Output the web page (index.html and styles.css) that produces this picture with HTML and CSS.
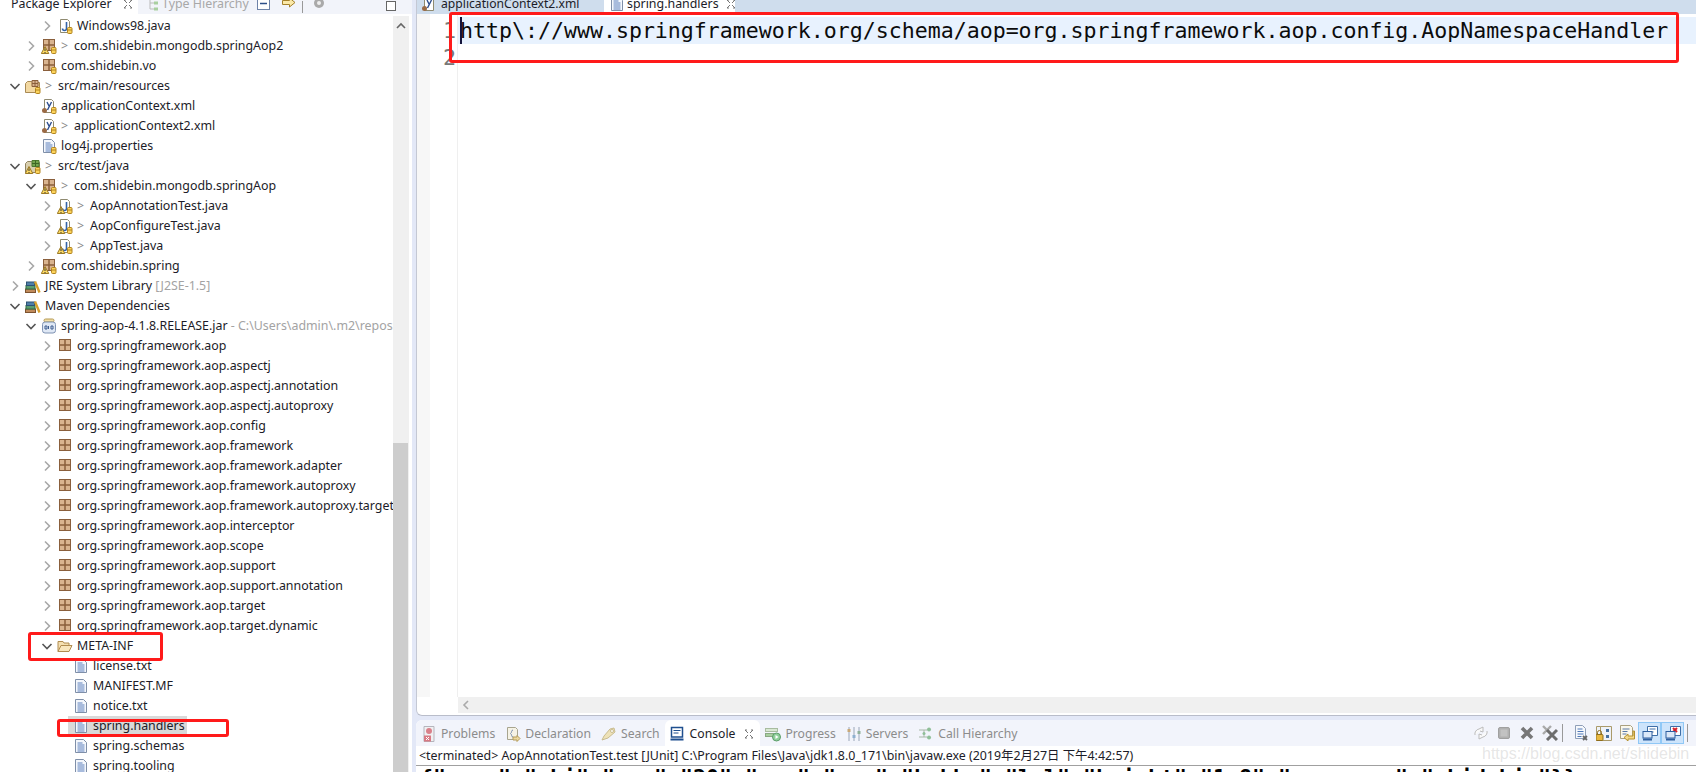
FILE: index.html
```html
<!DOCTYPE html>
<html lang="en">
<head>
<meta charset="utf-8">
<title>Eclipse - spring.handlers</title>
<link rel="stylesheet" href="styles.css">
</head>
<body>
<svg class="defs" width="0" height="0" aria-hidden="true">
  <defs>
    <symbol id="cr" viewBox="0 0 16 16"><path d="M6 3.5l4.5 4.5L6 12.500" fill="none" stroke="#a8a8a8" stroke-width="1.6"/></symbol>
    <symbol id="cd" viewBox="0 0 16 16"><path d="M3.500 6l4.500 4.500L12.500 6" fill="none" stroke="#555" stroke-width="1.6"/></symbol>
    <symbol id="close" viewBox="0 0 12 12"><path d="M2 2l3 3M10 2L7 5M2 10l3-3M10 10L7 7M2 2h2M8 2h2M2 10h2M8 10h2" fill="none" stroke="#777" stroke-width="1"/></symbol>
    <symbol id="pkg" viewBox="0 0 16 16"><rect x="2.500" y="1.500" width="11" height="11" fill="#d9b48f" stroke="#8a5f3c"/><path d="M8 1.500v11M2.500 7h11" stroke="#8a5f3c" stroke-width="1.500"/></symbol>
    <symbol id="lock" viewBox="0 0 16 16"><rect x="10.500" y="9.500" width="4.500" height="6" rx="1" fill="#fbd35c" stroke="#b3851f"/><path d="M10.500 12h4.500" stroke="#b3851f"/></symbol>
    <symbol id="warn" viewBox="0 0 16 16"><path d="M4 8.500L7.800 15.500H.3z" fill="#fbd860" stroke="#9c7a26"/><path d="M4 10.500v2.500M4 14v1" stroke="#333"/></symbol>
    <symbol id="jfile" viewBox="0 0 16 16"><path d="M3.500 1.500h7l2 2v11h-9z" fill="#fff" stroke="#8f8a70"/><path d="M9.500 4v6.500a2 2 0 0 1-4 0" fill="none" stroke="#3463a8" stroke-width="1.600"/></symbol>
    <symbol id="xfile" viewBox="0 0 16 16"><path d="M3.500 1.500h7l2 2v11h-9z" fill="#fff" stroke="#8f8a70"/><path d="M6 4l2 4M10.500 4l-4 8" fill="none" stroke="#2f4f8f" stroke-width="1.400"/><circle cx="3.500" cy="12.500" r="2.500" fill="#9a6a45"/></symbol>
    <symbol id="tfile" viewBox="0 0 16 16"><path d="M2.500 1.500h8l3 3v10h-11z" fill="#f4f7fc" stroke="#7f8fa8"/><path d="M4.500 5h5M4.500 7h7M4.500 9h7M4.500 11h7M4.500 13h7" stroke="#5c80bd"/></symbol>
    <symbol id="srcf" viewBox="0 0 16 16"><path d="M.5 14.500v-9l2-2h4l1 1h7v10z" fill="#f3d9a2" stroke="#a98a55"/><path d="M7 2.500h6v6H7z" fill="#d9b48f" stroke="#8a5f3c"/><path d="M10 2.500v6M7 5.500h6" stroke="#8a5f3c"/></symbol>
    <symbol id="tstf" viewBox="0 0 16 16"><path d="M.5 14.500v-9l2-2h4l1 1h7v10z" fill="#d9cfae" stroke="#8f8360"/><path d="M7 2.500h7v6H7z" fill="#74a54e" stroke="#4d7a2e"/><path d="M10.500 2.500v6M7 5.500h7" stroke="#3e6624"/></symbol>
    <symbol id="lib" viewBox="0 0 16 16"><rect x=".5" y="11" width="10" height="3.500" fill="#c08a5b" stroke="#7d5430"/><rect x="1" y="7.500" width="9" height="3.500" fill="#5b9c70" stroke="#2f6a44"/><rect x="1.500" y="4" width="8" height="3.500" fill="#4f7fa8" stroke="#2d5274"/><path d="M10 3.500l4.500 11" stroke="#d9a12c" stroke-width="2.400"/></symbol>
    <symbol id="jar" viewBox="0 0 16 16"><rect x="3" y="1" width="10" height="3" rx="1.500" fill="#f3dfa6" stroke="#b59a55"/><rect x="1.500" y="4" width="13" height="11" rx="2.500" fill="#dfe8f5" stroke="#7f93b3"/><path d="M4 8h2v3H4zM7.500 8v3M10 8h2v3h-2z" fill="none" stroke="#3d5d90"/></symbol>
    <symbol id="fold" viewBox="0 0 16 16"><path d="M1 13.500v-10h5l1 1.500h5v2" fill="#f4dfb0" stroke="#b08c50"/><path d="M1 13.500l3-6h11l-3 6z" fill="#f8e6bd" stroke="#b08c50"/></symbol>
    <symbol id="hier" viewBox="0 0 16 16"><path d="M5 3v10h4M5 7h4" fill="none" stroke="#bbb"/><rect x="3" y="1" width="4" height="3" fill="#a9cfa0"/><rect x="9" y="5.500" width="4" height="3" fill="#a9cfa0"/><rect x="9" y="11.500" width="4" height="3" fill="#a9cfa0"/></symbol>
    <symbol id="coll" viewBox="0 0 16 16"><rect x="1.500" y="1.500" width="12" height="12" fill="#fff" stroke="#6e83a8"/><path d="M4 7.500h7" stroke="#2d4f88" stroke-width="1.500"/></symbol>
    <symbol id="link" viewBox="0 0 16 16"><path d="M1.500 4.500h7V2l5.500 4.500-5.500 4.500V8.500h-7z" fill="#fbe9a8" stroke="#a5812c"/></symbol>
    <symbol id="gear" viewBox="0 0 16 16"><circle cx="8" cy="7" r="5" fill="#aaa"/><circle cx="8" cy="7" r="2" fill="#eee"/></symbol>
    <symbol id="prob" viewBox="0 0 16 16"><path d="M3 .5h10v15H3z" fill="#f0f0f2" stroke="#b5b5bd"/><circle cx="8" cy="5" r="3" fill="#d9808a"/><rect x="3" y="9.500" width="7" height="6" fill="#d87a84"/><path d="M5 11l3 3M8 11l-3 3" stroke="#fff"/></symbol>
    <symbol id="decl" viewBox="0 0 16 16"><path d="M2.500 1.500h8l2 2v10h-10z" fill="#f6f3e6" stroke="#a8a58f"/><path d="M8 4c-2 0-1 3-2.500 3.500C7 8 6 11 8 11" fill="none" stroke="#7a8fb0"/><path d="M8 11h4V9.500l3 3-3 3V14H8z" fill="#ecd9a0" stroke="#b59c5a"/></symbol>
    <symbol id="srch" viewBox="0 0 16 16"><path d="M1 14l2-4 6-7 4-1 1 4-7 6z" fill="#eee2b8" stroke="#c9bc90"/><circle cx="11" cy="5" r="1.500" fill="#fff" stroke="#c9bc90"/></symbol>
    <symbol id="cons" viewBox="0 0 16 16"><rect x="1.500" y="1.500" width="11" height="9.500" fill="#fff" stroke="#1f4f8f" stroke-width="1.500"/><path d="M3.500 4.500h7M3.500 7h5" stroke="#1f4f8f"/><path d="M.5 12.500h13v2H.5z" fill="#1f4f8f"/></symbol>
    <symbol id="prog" viewBox="0 0 16 16"><rect x=".5" y="2.500" width="12" height="3" fill="#d8e8d2" stroke="#a8bca0"/><rect x=".5" y="7.500" width="8" height="3" fill="#a8cfa0" stroke="#8aa884"/><circle cx="11.500" cy="11" r="4" fill="#8fcf9a" stroke="#5c9c6a"/><path d="M10.500 9l3 2-3 2z" fill="#fff"/></symbol>
    <symbol id="serv" viewBox="0 0 16 16"><path d="M3 1v14M8 1v14M13 1v14" stroke="#9aa6b8"/><rect x="1.500" y="3" width="3" height="3" fill="#c8a878"/><rect x="6.500" y="9" width="3" height="3" fill="#8fb0cf"/><rect x="11.500" y="5" width="3" height="3" fill="#8fb09a"/></symbol>
    <symbol id="call" viewBox="0 0 16 16"><path d="M1 4h8M1 11h8M6 4v7" fill="none" stroke="#a8b8a8"/><circle cx="11" cy="3.500" r="2" fill="#8fbf98"/><circle cx="11" cy="11.500" r="2" fill="#8fbf98"/><circle cx="6" cy="7.500" r="1.500" fill="#8fbf98"/></symbol>
    <symbol id="sync" viewBox="0 0 16 16"><path d="M2 10a5 5 0 0 1 4-6l4-2v5l-3-1M14 6a5 5 0 0 1-4 6l-4 2V9l3 1" fill="#fafafa" stroke="#bbb"/></symbol>
    <symbol id="stop" viewBox="0 0 16 16"><rect x="2.500" y="2.500" width="11" height="11" rx="1.500" fill="#b0b0b0" stroke="#a0a0a0"/><rect x="4.500" y="4.500" width="7" height="7" fill="#c2c2c2"/></symbol>
    <symbol id="xx" viewBox="0 0 16 16"><path d="M3 3l10 10M13 3L3 13" stroke="#777" stroke-width="3.600"/></symbol>
    <symbol id="xx2" viewBox="0 0 16 16"><path d="M1 1l8 8M9 1L1 9" stroke="#aaa" stroke-width="2.400"/><path d="M5 5l10 10M15 5L5 15" stroke="#6e6e6e" stroke-width="3"/></symbol>
    <symbol id="doc" viewBox="0 0 16 16"><path d="M2.500.5h7l3 3v10h-10z" fill="#f6f8fc" stroke="#8f9fb8"/><path d="M4.500 4h5M4.500 6.500h6M4.500 9h6M4.500 11.500h4" stroke="#4f78b8"/><path d="M10 11l4 4M14 11l-4 4" stroke="#666" stroke-width="1.800"/></symbol>
    <symbol id="pin" viewBox="0 0 16 16"><path d="M.5 1.500h4v14h-4zM4.500 1.500h11v14h-11z" fill="#eef2f8" stroke="#aa9a6a"/><rect x="10" y="4" width="3" height="3" fill="#46709f"/><rect x="10" y="10" width="3" height="3" fill="#46709f"/><rect x="0" y="9.500" width="7" height="6" rx="1" fill="#e8b840" stroke="#8f6e1c"/><path d="M1.500 9.500V7.500a2 2 0 0 1 4 0v2" fill="none" stroke="#8f6e1c"/></symbol>
    <symbol id="wrap" viewBox="0 0 16 16"><path d="M1.500.5h10l2 2v11h-12z" fill="#fbf8ec" stroke="#aaa080"/><path d="M3.500 4h7M3.500 6.500h5M3.500 9h4" stroke="#5878a8"/><path d="M14 6v5H9V9l-4 3.500L9 16v-2h6.500V6z" fill="#f3d98a" stroke="#b5922f"/></symbol>
    <symbol id="scr" viewBox="0 0 16 16"><path d="M5.500 1.500h10v9h-10z" fill="#fff" stroke="#3f6fa8"/><path d="M7.500 4h6M7.500 7h4" stroke="#3f6fa8"/><rect x="1" y="6.500" width="9" height="6.500" fill="#dbe8f8" stroke="#2e5f9f"/><path d="M1 14.500h9" stroke="#2e5f9f" stroke-width="2"/></symbol>
    <symbol id="scx" viewBox="0 0 16 16"><path d="M5.500 1.500h10v9h-10z" fill="#fff" stroke="#3f6fa8"/><path d="M8 3l4 4M12 3L8 7" stroke="#d8202a" stroke-width="2"/><rect x="1" y="6.500" width="9" height="6.500" fill="#dbe8f8" stroke="#2e5f9f"/><path d="M1 14.500h9" stroke="#2e5f9f" stroke-width="2"/></symbol>
    <symbol id="mini" viewBox="0 0 12 12"><rect x="1.500" y="1.500" width="9" height="9" fill="#fff" stroke="#666"/></symbol>
  </defs>
</svg>

<div class="app">
  <aside class="explorer">
    <header class="ex-head">
      <div class="ex-tab">
        <span class="label">Package Explorer</span>
        <svg class="i12 close"><use href="#close"/></svg>
      </div>
      <svg class="i16 ml-hier"><use href="#hier"/></svg>
      <span class="label muted ml-type">Type Hierarchy</span>
      <svg class="i16 ml-coll"><use href="#coll"/></svg>
      <svg class="i16 ml-link"><use href="#link"/></svg>
      <span class="vsep"></span>
      <svg class="i16 ml-gear"><use href="#gear"/></svg>
      <svg class="i12 ml-max"><use href="#mini"/></svg>
    </header>
    <div class="ex-body">
      <div class="tree">
        <div class="row l2"><svg class="chev"><use href="#cr"/></svg><svg class="ic"><use href="#jfile"/><use href="#lock"/></svg><span class="t">Windows98.java</span></div>
        <div class="row l1"><svg class="chev"><use href="#cr"/></svg><svg class="ic"><use href="#pkg"/><use href="#lock"/><use href="#warn"/></svg><span class="t"><span class="dec">&gt;</span>com.shidebin.mongodb.springAop2</span></div>
        <div class="row l1"><svg class="chev"><use href="#cr"/></svg><svg class="ic"><use href="#pkg"/><use href="#lock"/></svg><span class="t">com.shidebin.vo</span></div>
        <div class="row l0"><svg class="chev"><use href="#cd"/></svg><svg class="ic"><use href="#srcf"/><use href="#lock"/></svg><span class="t"><span class="dec">&gt;</span>src/main/resources</span></div>
        <div class="row l1"><span class="chev"></span><svg class="ic"><use href="#xfile"/><use href="#lock"/></svg><span class="t">applicationContext.xml</span></div>
        <div class="row l1"><span class="chev"></span><svg class="ic"><use href="#xfile"/><use href="#lock"/></svg><span class="t"><span class="dec">&gt;</span>applicationContext2.xml</span></div>
        <div class="row l1"><span class="chev"></span><svg class="ic"><use href="#tfile"/><use href="#lock"/></svg><span class="t">log4j.properties</span></div>
        <div class="row l0"><svg class="chev"><use href="#cd"/></svg><svg class="ic"><use href="#tstf"/><use href="#lock"/><use href="#warn"/></svg><span class="t"><span class="dec">&gt;</span>src/test/java</span></div>
        <div class="row l1"><svg class="chev"><use href="#cd"/></svg><svg class="ic"><use href="#pkg"/><use href="#lock"/><use href="#warn"/></svg><span class="t"><span class="dec">&gt;</span>com.shidebin.mongodb.springAop</span></div>
        <div class="row l2"><svg class="chev"><use href="#cr"/></svg><svg class="ic"><use href="#jfile"/><use href="#lock"/><use href="#warn"/></svg><span class="t"><span class="dec">&gt;</span>AopAnnotationTest.java</span></div>
        <div class="row l2"><svg class="chev"><use href="#cr"/></svg><svg class="ic"><use href="#jfile"/><use href="#lock"/><use href="#warn"/></svg><span class="t"><span class="dec">&gt;</span>AopConfigureTest.java</span></div>
        <div class="row l2"><svg class="chev"><use href="#cr"/></svg><svg class="ic"><use href="#jfile"/><use href="#lock"/><use href="#warn"/></svg><span class="t"><span class="dec">&gt;</span>AppTest.java</span></div>
        <div class="row l1"><svg class="chev"><use href="#cr"/></svg><svg class="ic"><use href="#pkg"/><use href="#lock"/><use href="#warn"/></svg><span class="t">com.shidebin.spring</span></div>
        <div class="row l0"><svg class="chev"><use href="#cr"/></svg><svg class="ic"><use href="#lib"/></svg><span class="t">JRE System Library <span class="q">[J2SE-1.5]</span></span></div>
        <div class="row l0"><svg class="chev"><use href="#cd"/></svg><svg class="ic"><use href="#lib"/></svg><span class="t">Maven Dependencies</span></div>
        <div class="row l1"><svg class="chev"><use href="#cd"/></svg><svg class="ic"><use href="#jar"/></svg><span class="t">spring-aop-4.1.8.RELEASE.jar <span class="q">- C:\Users\admin\.m2\repository\org\springframework</span></span></div>
        <div class="row l2"><svg class="chev"><use href="#cr"/></svg><svg class="ic"><use href="#pkg"/></svg><span class="t">org.springframework.aop</span></div>
        <div class="row l2"><svg class="chev"><use href="#cr"/></svg><svg class="ic"><use href="#pkg"/></svg><span class="t">org.springframework.aop.aspectj</span></div>
        <div class="row l2"><svg class="chev"><use href="#cr"/></svg><svg class="ic"><use href="#pkg"/></svg><span class="t">org.springframework.aop.aspectj.annotation</span></div>
        <div class="row l2"><svg class="chev"><use href="#cr"/></svg><svg class="ic"><use href="#pkg"/></svg><span class="t">org.springframework.aop.aspectj.autoproxy</span></div>
        <div class="row l2"><svg class="chev"><use href="#cr"/></svg><svg class="ic"><use href="#pkg"/></svg><span class="t">org.springframework.aop.config</span></div>
        <div class="row l2"><svg class="chev"><use href="#cr"/></svg><svg class="ic"><use href="#pkg"/></svg><span class="t">org.springframework.aop.framework</span></div>
        <div class="row l2"><svg class="chev"><use href="#cr"/></svg><svg class="ic"><use href="#pkg"/></svg><span class="t">org.springframework.aop.framework.adapter</span></div>
        <div class="row l2"><svg class="chev"><use href="#cr"/></svg><svg class="ic"><use href="#pkg"/></svg><span class="t">org.springframework.aop.framework.autoproxy</span></div>
        <div class="row l2"><svg class="chev"><use href="#cr"/></svg><svg class="ic"><use href="#pkg"/></svg><span class="t">org.springframework.aop.framework.autoproxy.target</span></div>
        <div class="row l2"><svg class="chev"><use href="#cr"/></svg><svg class="ic"><use href="#pkg"/></svg><span class="t">org.springframework.aop.interceptor</span></div>
        <div class="row l2"><svg class="chev"><use href="#cr"/></svg><svg class="ic"><use href="#pkg"/></svg><span class="t">org.springframework.aop.scope</span></div>
        <div class="row l2"><svg class="chev"><use href="#cr"/></svg><svg class="ic"><use href="#pkg"/></svg><span class="t">org.springframework.aop.support</span></div>
        <div class="row l2"><svg class="chev"><use href="#cr"/></svg><svg class="ic"><use href="#pkg"/></svg><span class="t">org.springframework.aop.support.annotation</span></div>
        <div class="row l2"><svg class="chev"><use href="#cr"/></svg><svg class="ic"><use href="#pkg"/></svg><span class="t">org.springframework.aop.target</span></div>
        <div class="row l2"><svg class="chev"><use href="#cr"/></svg><svg class="ic"><use href="#pkg"/></svg><span class="t">org.springframework.aop.target.dynamic</span></div>
        <div class="row l2"><svg class="chev"><use href="#cd"/></svg><svg class="ic"><use href="#fold"/></svg><span class="t">META-INF</span></div>
        <div class="row l3"><span class="chev"></span><svg class="ic"><use href="#tfile"/></svg><span class="t">license.txt</span></div>
        <div class="row l3"><span class="chev"></span><svg class="ic"><use href="#tfile"/></svg><span class="t">MANIFEST.MF</span></div>
        <div class="row l3"><span class="chev"></span><svg class="ic"><use href="#tfile"/></svg><span class="t">notice.txt</span></div>
        <div class="row l3"><span class="chev"></span><span class="sel"><svg class="ic"><use href="#tfile"/></svg><span class="t">spring.handlers</span></span></div>
        <div class="row l3"><span class="chev"></span><svg class="ic"><use href="#tfile"/></svg><span class="t">spring.schemas</span></div>
        <div class="row l3"><span class="chev"></span><svg class="ic"><use href="#tfile"/></svg><span class="t">spring.tooling</span></div>
      </div>
      <div class="vscroll">
        <svg class="vs-up" viewBox="0 0 12 12"><path d="M2 8l4-4 4 4" fill="none" stroke="#666" stroke-width="1.600"/></svg>
        <div class="vs-thumb"></div>
      </div>
    </div>
  </aside>

  <main class="workspace">
    <section class="editor">
      <div class="ed-tabs">
        <div class="ed-tab">
          <svg class="i16"><use href="#xfile"/></svg>
          <span class="label">applicationContext2.xml</span>
        </div>
        <div class="ed-tab active">
          <svg class="i16"><use href="#tfile"/></svg>
          <span class="label">spring.handlers</span>
          <svg class="i12 close"><use href="#close"/></svg>
        </div>
      </div>
      <div class="ed-body">
        <div class="gut-a"></div>
        <div class="gut-b"><div class="num">1</div><div class="num">2</div></div>
        <div class="code">
          <div class="line cur">http\://www.springframework.org/schema/aop=org.springframework.aop.config.AopNamespaceHandler</div>
          <div class="line"></div>
        </div>
      </div>
      <div class="hscroll">
        <svg class="hs-left" viewBox="0 0 12 12"><path d="M8 2L4 6l4 4" fill="none" stroke="#aaa" stroke-width="1.600"/></svg>
      </div>
    </section>

    <section class="bottom">
      <div class="view-tabs">
        <div class="vt"><svg class="i16"><use href="#prob"/></svg><span>Problems</span></div>
        <div class="vt"><svg class="i16"><use href="#decl"/></svg><span>Declaration</span></div>
        <div class="vt"><svg class="i16"><use href="#srch"/></svg><span>Search</span></div>
        <div class="vt on"><svg class="i16"><use href="#cons"/></svg><span>Console</span><svg class="i12 close ml-close"><use href="#close"/></svg></div>
        <div class="vt"><svg class="i16"><use href="#prog"/></svg><span>Progress</span></div>
        <div class="vt"><svg class="i16"><use href="#serv"/></svg><span>Servers</span></div>
        <div class="vt"><svg class="i16"><use href="#call"/></svg><span>Call Hierarchy</span></div>
        <div class="tools">
          <span class="tb"><svg class="i16"><use href="#sync"/></svg></span>
          <span class="tb"><svg class="i16"><use href="#stop"/></svg></span>
          <span class="tb"><svg class="i16"><use href="#xx"/></svg></span>
          <span class="tb"><svg class="i16"><use href="#xx2"/></svg></span>
          <span class="tsep"></span>
          <span class="tb"><svg class="i16"><use href="#doc"/></svg></span>
          <span class="tb"><svg class="i16"><use href="#pin"/></svg></span>
          <span class="tb"><svg class="i16"><use href="#wrap"/></svg></span>
          <span class="tb on"><svg class="i16"><use href="#scr"/></svg></span>
          <span class="tb on"><svg class="i16"><use href="#scx"/></svg></span>
          <span class="tsep end"></span>
        </div>
      </div>
      <div class="status">&lt;terminated&gt; AopAnnotationTest.test [JUnit] C:\Program Files\Java\jdk1.8.0_171\bin\javaw.exe (2019年2月27日 下午4:42:57)</div>
      <div class="out">{"name":"shi","age":"20","sex":"man","hobby":"lol","height":"1.8","username":"shidebin"}}</div>
    </section>
  </main>

  <div class="mark mark-code"></div>
  <div class="mark mark-meta"></div>
  <div class="mark mark-file"></div>
  <div class="watermark">https://blog.csdn.net/shidebin</div>
</div>
</body>
</html>
```
FILE: styles.css
```css
* { box-sizing: border-box; }
html, body { margin: 0; padding: 0; background: #fff; }
body { font: 12.4px/20px "Noto Sans", "Noto Sans CJK SC", sans-serif; color: #1c1c28; overflow: hidden; }
svg { display: block; flex: none; overflow: visible; }
.defs { position: absolute; }
.i16 { width: 16px; height: 16px; }
.i12 { width: 12px; height: 12px; }

.app { position: relative; display: flex; width: 1696px; height: 772px; overflow: hidden; }

/* Package explorer */
.explorer { width: 412px; flex: none; display: flex; flex-direction: column; background: #fff; }
.ex-head { height: 14px; flex: none; display: flex; align-items: flex-end; overflow: hidden; background: #f2f4fa; }
.ex-tab { width: 138px; height: 20px; flex: none; display: flex; align-items: center; padding-left: 11px; background: #fff; }
.ex-tab .close { margin-left: 10px; }
.label { white-space: nowrap; line-height: 20px; }
.muted { color: #a8a8a8; }
.ex-head > svg { margin-bottom: 2px; }
.ml-hier { margin-left: 7px; }
.ml-type { margin-left: 1px; }
.ml-coll { margin-left: 7px; }
.ml-link { margin-left: 9px; }
.vsep { width: 1px; height: 12px; margin: 0 0 1px 5px; background: #999; flex: none; }
.ml-gear { margin-left: 8px; }
.ml-max { margin-left: 58px; }

.ex-body { flex: 1; min-height: 0; display: flex; }
.tree { width: 393px; flex: none; padding-top: 2px; overflow: hidden; }
.row { height: 20px; display: flex; align-items: center; white-space: nowrap; overflow: hidden; }
.l0 { padding-left: 7px; }
.l1 { padding-left: 23px; }
.l2 { padding-left: 39px; }
.l3 { padding-left: 55px; }
.chev { width: 16px; height: 16px; flex: none; }
.ic { width: 16px; height: 16px; margin: 0 4px 0 2px; flex: none; }
.t { line-height: 20px; }
.dec { display: inline-block; width: 13px; color: #8a8a8a; }
.q { color: #a3a3a3; }
.sel { display: flex; align-items: center; height: 20px; margin-left: -3px; padding: 0 2px 0 3px; background: #d9d9d9; }

.vscroll { width: 16px; flex: none; margin-top: 2px; background: #f0f0f0; display: flex; flex-direction: column; }
.vs-up { width: 12px; height: 12px; margin: 4px 2px 0; }
.vs-thumb { margin-top: auto; height: 329px; width: 15px; background: #cdcdcd; }

/* Workspace */
.workspace { flex: 1; min-width: 0; display: flex; flex-direction: column; padding-left: 4px; background: #e3e8f7; }
.editor { height: 716px; flex: none; display: flex; flex-direction: column; background: #fff; border-left: 1px solid #c4c8d4; border-bottom: 1px solid #b9bdca; border-bottom-left-radius: 6px; }
.ed-tabs { height: 14px; flex: none; display: flex; align-items: flex-end; overflow: hidden; background: #cfdded; }
.ed-tab { height: 20px; flex: none; display: flex; align-items: center; width: 187px; padding-left: 4px; gap: 4px; font-size: 12.15px; }
.ed-tab.active { width: 131px; padding-left: 5px; gap: 1px; background: #fff; font-size: 12.4px; }
.ed-tab.active .label { margin-left: 1px; }
.ed-tab.active .close { margin-left: 5px; }

.ed-body { flex: 1; min-height: 0; display: flex; }
.gut-a { width: 13px; flex: none; background: #f7f7f7; }
.gut-b { width: 28px; flex: none; padding: 3px 1px 0 0; border-right: 1px solid #efefef; text-align: right; }
.num { height: 27px; font: 21.6px/27px "DejaVu Sans Mono", monospace; color: #787878; }
.code { flex: 1; min-width: 0; padding-top: 3px; }
.line { position: relative; height: 27px; padding-left: 2px; font: 21.58px/27px "DejaVu Sans Mono", monospace; color: #0c0c0c; white-space: nowrap; }
.line.cur { background: #e8f2fe; }
.line.cur::before { content: ""; position: absolute; left: 2px; top: 0; width: 2px; height: 27px; background: #14143c; }

.hscroll { height: 16px; flex: none; margin-left: 41px; margin-bottom: 2px; background: #f0f0f0; display: flex; align-items: center; padding-left: 2px; }
.hs-left { width: 12px; height: 12px; }

/* Bottom panel */
.bottom { flex: 1; min-height: 0; margin-top: 4px; display: flex; flex-direction: column; background: #fff; border-top-left-radius: 6px; overflow: hidden; }
.view-tabs { height: 26px; flex: none; display: flex; align-items: center; background: #f2f4fb; }
.vt { height: 26px; display: flex; align-items: center; gap: 4px; padding: 2px 5px 0; color: #8c8c8c; font-size: 12.2px; white-space: nowrap; flex: none; }
.vt.on { color: #1c1c28; background: #fff; border-radius: 6px 6px 0 0; }
.ml-close { margin-left: 4px; }
.tools { margin-left: auto; display: flex; align-items: center; padding-right: 8px; }
.tb { width: 23px; height: 22px; display: flex; align-items: center; justify-content: center; flex: none; }
.tb.on { background: #cde4fb; border: 1px solid #90c8f6; }
.tsep { width: 1px; height: 18px; background: #999; margin: 0 6px 0 1px; flex: none; }
.tsep.end { margin: 0 0 0 3px; }
.status { height: 20px; flex: none; padding: 1px 0 0 3px; line-height: 18px; border-bottom: 1px solid #a0a0a0; white-space: nowrap; }
.out { padding-left: 4px; font: bold 21.6px/27px "DejaVu Sans Mono", monospace; color: #000; white-space: nowrap; margin-top: -2px; }

/* Annotations drawn over the screenshot */
.mark { position: absolute; border: 3px solid #ff1a1a; border-radius: 3px; }
.mark-code { left: 449px; top: 12px; width: 1230px; height: 51px; }
.mark-meta { left: 28px; top: 632px; width: 135px; height: 29px; }
.mark-file { left: 57px; top: 719px; width: 172px; height: 18px; }
.watermark { position: absolute; left: 1482px; top: 744px; font: 16px/20px "Liberation Sans", sans-serif; color: rgba(170, 170, 170, .3); white-space: nowrap; }
```
